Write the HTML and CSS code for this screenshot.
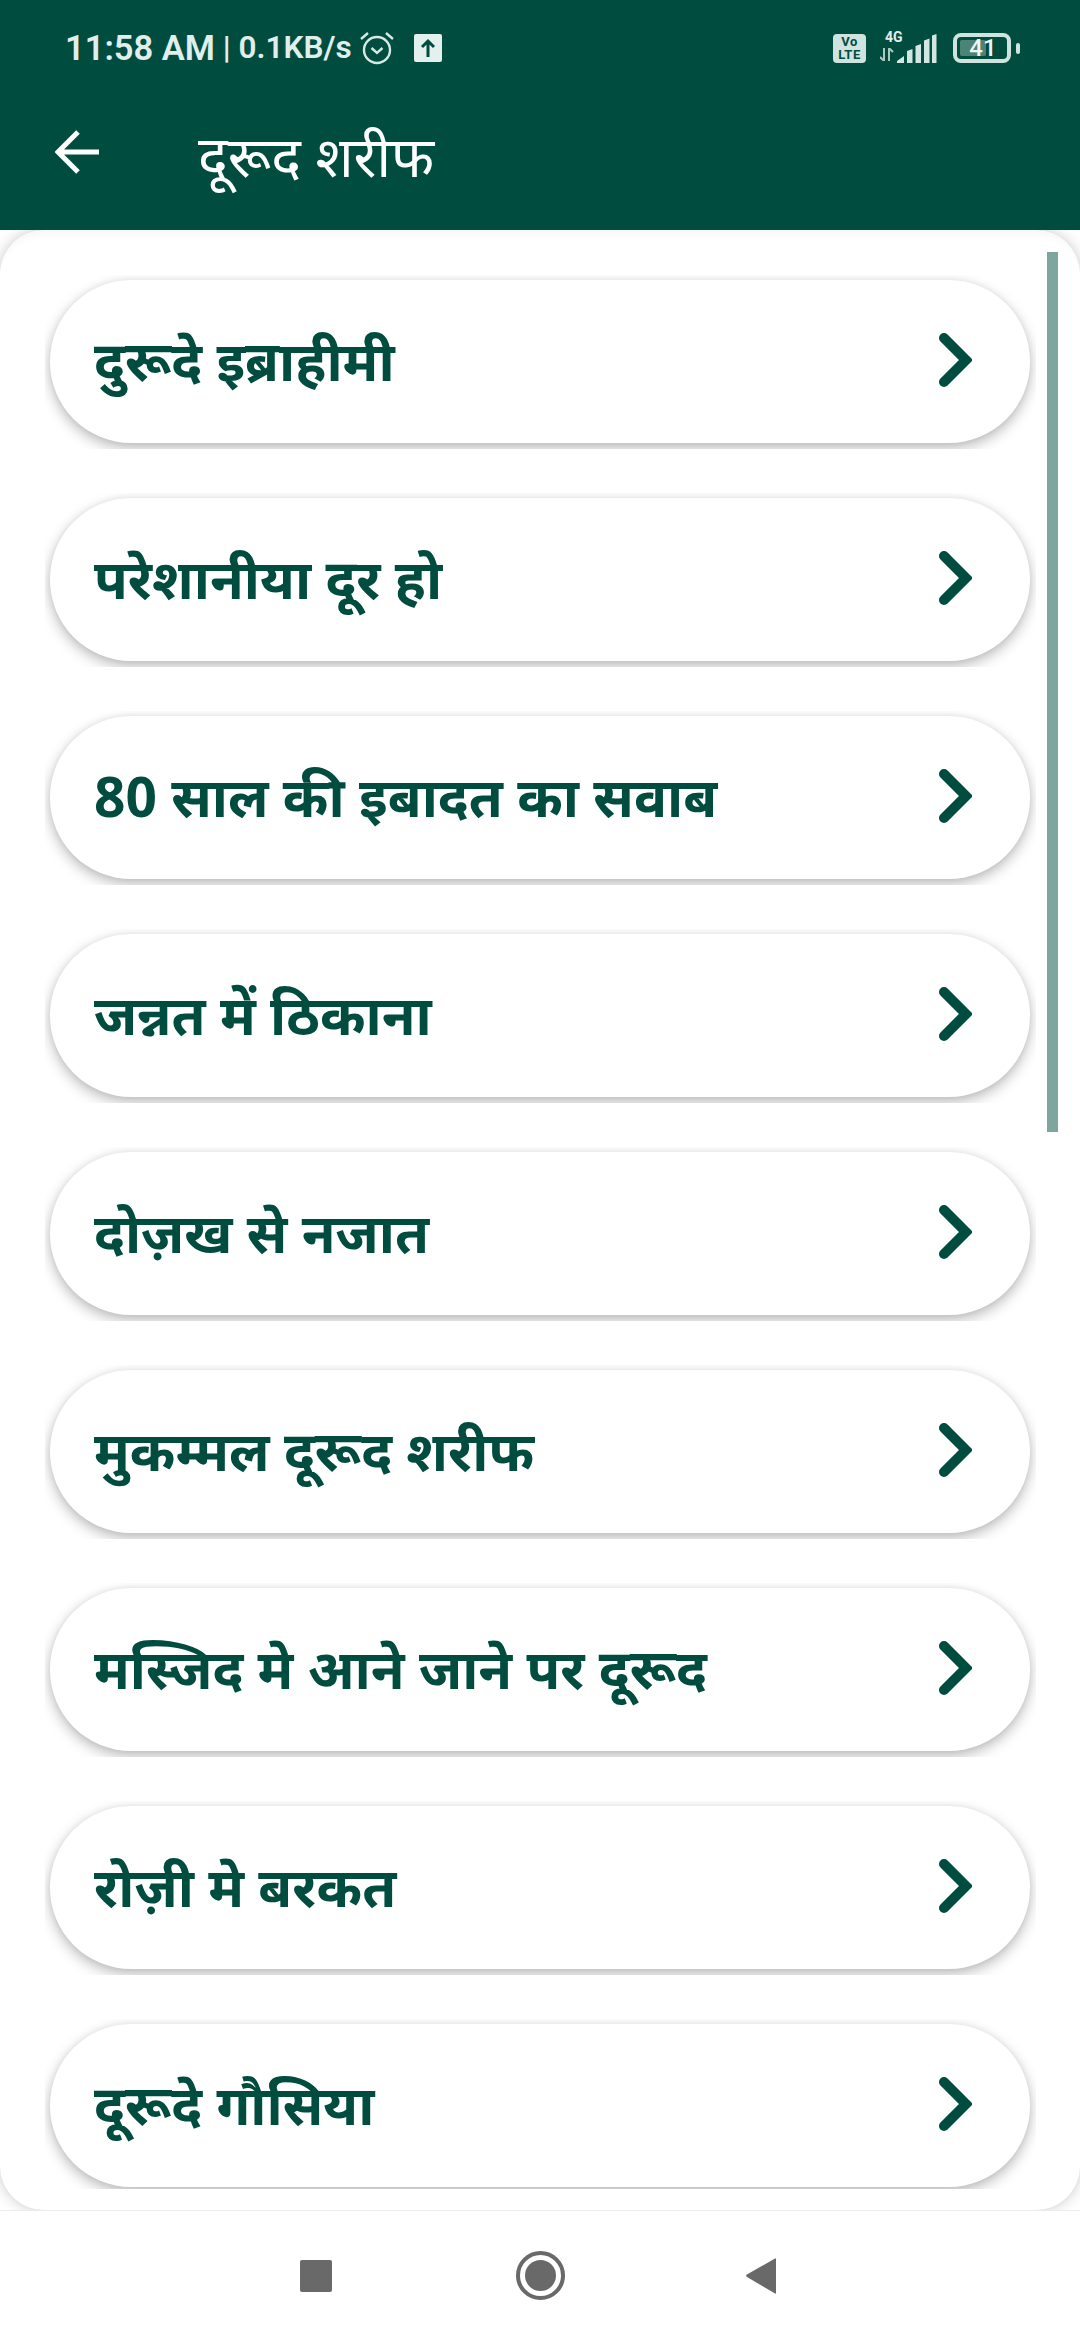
FILE: index.html
```html
<!DOCTYPE html>
<html lang="hi">
<head>
<meta charset="utf-8">
<title>दूरूद शरीफ</title>
<link rel="stylesheet" href="styles.css">
</head>
<body>
<div class="app">
  <header class="appbar">
    <div class="status">
      <div class="status-left">
        <span class="clock">11:58 AM</span><span class="speed"> | 0.1KB/s</span>
        <svg class="alarm" viewBox="0 0 34 34" width="34" height="34"><circle cx="17" cy="19" r="13" fill="none" stroke="#d5e8e3" stroke-width="2.4"/><path d="M11.500 17l5.500 5 5.500-5" fill="none" stroke="#d5e8e3" stroke-width="2.400"/><path d="M1 8l7-6M33 8l-7-6" fill="none" stroke="#d5e8e3" stroke-width="2.400"/></svg>
        <svg class="upload" viewBox="0 0 28 28" width="28" height="28"><rect width="28" height="28" rx="2" fill="#e3f1ee"/><path d="M14 23V7M8 13l6-6 6 6" fill="none" stroke="#004d40" stroke-width="3"/></svg>
      </div>
      <div class="status-right">
        <div class="volte"><span>Vo</span><span>LTE</span></div>
        <div class="net">
          <span class="net-4g">4G</span>
          <svg viewBox="0 0 14 13" width="14" height="13"><path d="M4 0v13L0 9M9 13V0l4 4" fill="none" stroke="#a9cbc3" stroke-width="2"/></svg>
        </div>
        <svg class="signal" viewBox="0 0 40 30" width="40" height="30"><path d="M0 29v-2l7-5v7zM10 29V17l5.500-2v14zM18.500 29V12l5.500-2v19zM27 29V6.500l5.500-2V29zM35 29V1.500l4.500-1.500v29z" fill="#d3e6e1"/></svg>
        <div class="battery">
          <div class="battery-case"><span class="battery-fill"></span><span class="battery-num">41</span></div>
          <span class="battery-nub"></span>
        </div>
      </div>
    </div>
    <div class="toolbar">
      <svg class="back" viewBox="0 0 44 44" width="44" height="44"><path d="M44 22H3M23 2L3 22l20 20" fill="none" stroke="#fff" stroke-width="5"/></svg>
      <h1 class="title">दूरूद शरीफ</h1>
    </div>
  </header>

  <main class="sheet">
    <ul class="list">
      <li class="clip"><a class="card"><span class="label">दुरूदे इब्राहीमी</span><svg class="chev" viewBox="0 0 34 56" width="34" height="56"><path d="M6 6l22 22L6 50" fill="none" stroke="#004d40" stroke-width="10" stroke-linecap="round"/></svg></a></li>
      <li class="clip"><a class="card"><span class="label">परेशानीया दूर हो</span><svg class="chev" viewBox="0 0 34 56" width="34" height="56"><path d="M6 6l22 22L6 50" fill="none" stroke="#004d40" stroke-width="10" stroke-linecap="round"/></svg></a></li>
      <li class="clip"><a class="card"><span class="label">80 साल की इबादत का सवाब</span><svg class="chev" viewBox="0 0 34 56" width="34" height="56"><path d="M6 6l22 22L6 50" fill="none" stroke="#004d40" stroke-width="10" stroke-linecap="round"/></svg></a></li>
      <li class="clip"><a class="card"><span class="label">जन्नत में ठिकाना</span><svg class="chev" viewBox="0 0 34 56" width="34" height="56"><path d="M6 6l22 22L6 50" fill="none" stroke="#004d40" stroke-width="10" stroke-linecap="round"/></svg></a></li>
      <li class="clip"><a class="card"><span class="label">दोज़ख से नजात</span><svg class="chev" viewBox="0 0 34 56" width="34" height="56"><path d="M6 6l22 22L6 50" fill="none" stroke="#004d40" stroke-width="10" stroke-linecap="round"/></svg></a></li>
      <li class="clip"><a class="card"><span class="label">मुकम्मल दूरूद शरीफ</span><svg class="chev" viewBox="0 0 34 56" width="34" height="56"><path d="M6 6l22 22L6 50" fill="none" stroke="#004d40" stroke-width="10" stroke-linecap="round"/></svg></a></li>
      <li class="clip"><a class="card"><span class="label">मस्जिद मे आने जाने पर दूरूद</span><svg class="chev" viewBox="0 0 34 56" width="34" height="56"><path d="M6 6l22 22L6 50" fill="none" stroke="#004d40" stroke-width="10" stroke-linecap="round"/></svg></a></li>
      <li class="clip"><a class="card"><span class="label">रोज़ी मे बरकत</span><svg class="chev" viewBox="0 0 34 56" width="34" height="56"><path d="M6 6l22 22L6 50" fill="none" stroke="#004d40" stroke-width="10" stroke-linecap="round"/></svg></a></li>
      <li class="clip"><a class="card"><span class="label">दूरूदे गौसिया</span><svg class="chev" viewBox="0 0 34 56" width="34" height="56"><path d="M6 6l22 22L6 50" fill="none" stroke="#004d40" stroke-width="10" stroke-linecap="round"/></svg></a></li>
    </ul>
    <div class="scrollbar"></div>
  </main>

  <nav class="navbar">
    <span class="nav-square"></span>
    <span class="nav-circle"><span class="nav-dot"></span></span>
    <svg class="nav-back" viewBox="0 0 32 38" width="32" height="38"><path d="M31 2v34q0 1-1 .5L2 20q-1.500-1-.5-2.200L30 1.500q1-.5 1 .5z" fill="#696969"/></svg>
  </nav>
</div>
</body>
</html>
```
FILE: styles.css
```css
* { box-sizing: border-box; }
html, body { margin: 0; padding: 0; background: #fff; }
.app {
  width: 1080px; height: 2340px; display: flex; flex-direction: column; overflow: hidden;
  font-family: "Noto Sans", "Noto Sans Devanagari", "Lohit Devanagari", "Liberation Sans", sans-serif;
}
.appbar { height: 230px; background: #004d40; flex: none; position: relative; z-index: 1; }
.status { height: 96px; display: flex; justify-content: space-between; align-items: flex-start; padding: 31px 60px 0 65px; }
.status-left { display: flex; align-items: center; }
.clock { font: 600 34.5px/34px Roboto, sans-serif; color: #e0efeb; white-space: pre; }
.speed { font: 600 31.5px/34px Roboto, sans-serif; color: #e0efeb; white-space: pre; }
.alarm { margin-left: 8px; }
.upload { margin-left: 20px; }
.status-right { display: flex; align-items: flex-start; }
.volte {
  width: 33px; height: 29px; margin-top: 3px; background: #cfe4df; border-radius: 4px; color: #004d40;
  font: 700 13px/12.5px Roboto, sans-serif; letter-spacing: .5px; display: flex; flex-direction: column; align-items: center; justify-content: center;
}
.net { margin-left: 14px; width: 17px; display: flex; flex-direction: column; align-items: flex-start; }
.net-4g { font: 700 14px/13px Roboto, sans-serif; color: #e0efeb; margin: 0 0 4px 5px; white-space: nowrap; }
.signal { margin: 3px 0 0 0; }
.battery { display: flex; align-items: center; margin: 2px 0 0 16px; }
.battery-case { width: 58px; height: 30px; border: 4px solid #cfe4df; border-radius: 8px; position: relative; display: flex; align-items: center; justify-content: center; padding-left: 2px; }
.battery-fill { position: absolute; left: 3px; top: 3px; bottom: 3px; width: 26px; background: #4d8276; border-radius: 2px; }
.battery-num { position: relative; font: 500 24px/24px Roboto, sans-serif; color: #eef6f4; }
.battery-nub { width: 4px; height: 11px; margin-left: 5px; background: #cfe4df; border-radius: 2px; }
.toolbar { height: 134px; display: flex; align-items: flex-start; padding: 34px 0 0 55px; }
.back { flex: none; }
.title { margin: -13px 0 0 99px; font-size: 56px; line-height: 76px; font-weight: 400; color: #fff; white-space: nowrap; }

.sheet {
  flex: none; height: 1980px; background: #fff; border-radius: 44px; position: relative;
  box-shadow: 0 0 14px rgba(0,0,0,.22), inset 0 12px 10px -8px rgba(0,0,0,.04);
  padding: 45px 44px 0 45px;
}
.list { list-style: none; margin: 0; padding: 0; display: flex; flex-direction: column; gap: 44px; height: 100%; overflow: hidden; }
.clip { flex: none; height: 174px; padding: 5px 6px 6px 5px; overflow: hidden; }
.clip:last-child { height: 170px; }
.card {
  display: flex; align-items: center; justify-content: space-between; height: 163px; background: #fff; border-radius: 81px;
  padding: 0 58px 0 44px;
  box-shadow: 0 5px 14px rgba(0,0,0,.27), 0 0 6px rgba(0,0,0,.05);
}
.label { font-size: 55px; line-height: 74px; margin-top: -3px; font-weight: 700; color: #004d40; white-space: nowrap; }
.chev { flex: none; margin-top: -3px; }
.scrollbar { position: absolute; left: 1047px; top: 22px; width: 11px; height: 880px; background: #7fa69e; }

.navbar { flex: 1; background: #fff; position: relative; border-top: 1px solid #ececec; }
.nav-square { position: absolute; left: 300px; top: 49px; width: 32px; height: 32px; background: #696969; border-radius: 2px; }
.nav-circle { position: absolute; left: 516px; top: 40px; width: 49px; height: 49px; border: 4px solid #696969; border-radius: 50%; display: flex; align-items: center; justify-content: center; }
.nav-dot { width: 31px; height: 31px; background: #696969; border-radius: 50%; }
.nav-back { position: absolute; left: 745px; top: 46px; }
```
